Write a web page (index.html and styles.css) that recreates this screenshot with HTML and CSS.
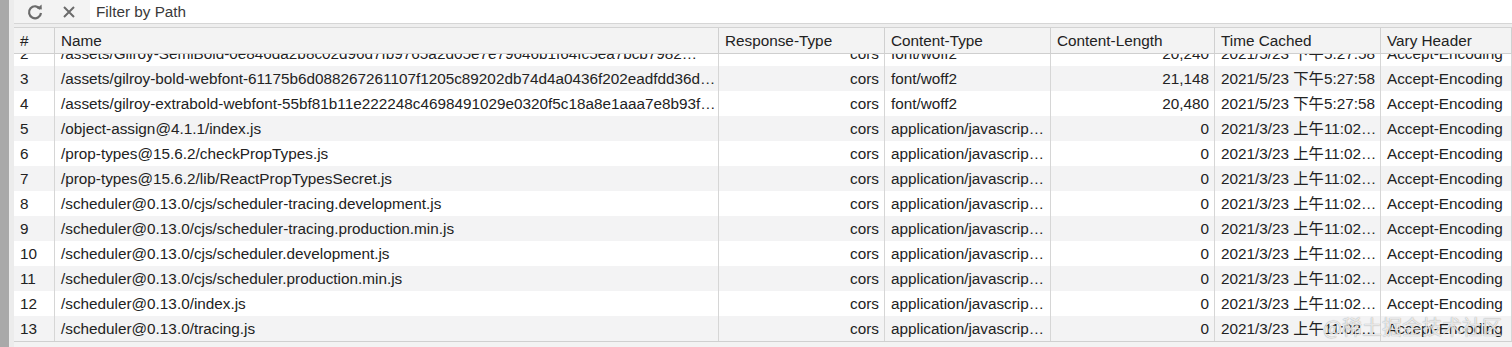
FILE: index.html
```html
<!DOCTYPE html>
<html>
<head>
	<meta charset="utf-8">
	<title>Cache Storage</title>
	<link rel="stylesheet" href="styles.css">
</head>
<body>

<div class="sideStrip"></div>

<div class="panel">

	<!-- TOOLBAR -->
	<div class="toolbar">
		<button class="toolBtn" title="Refresh">
			<svg width="18" height="18" viewBox="0 0 18 18">
				<path d="M14.2 6.2A6 6 0 1 0 15 10" fill="none" stroke="#6b6b6b" stroke-width="2.2"/>
				<path d="M10.8 5.6L15.8 6.6L15.6 1.6Z" fill="#6b6b6b"/>
			</svg>
		</button>
		<button class="toolBtn" title="Clear">
			<svg width="14" height="14" viewBox="0 0 14 14">
				<path d="M2 2L12 12M12 2L2 12" stroke="#6b6b6b" stroke-width="2"/>
			</svg>
		</button>
		<div class="filter">Filter by Path</div>
	</div>
	<div class="spacer"></div>

	<!-- TABLE -->
	<div class="table">
		<div class="row head">
			<div class="cell">#</div>
			<div class="cell">Name</div>
			<div class="cell">Response-Type</div>
			<div class="cell">Content-Type</div>
			<div class="cell">Content-Length</div>
			<div class="cell">Time Cached</div>
			<div class="cell">Vary Header</div>
		</div>

		<div class="scroller">
			<div class="rows">
				<div class="row">
					<div class="cell">1</div>
					<div class="cell">/assets/Gilroy-Medium-3f9a61c2b8d0e4c7a1e2f5b6d9c8a7e4f0b1c2d3e4f5a6b7c8d9e0f1a2b3c4d5…</div>
					<div class="cell num">cors</div>
					<div class="cell">font/woff2</div>
					<div class="cell num">20,912</div>
					<div class="cell">2021/5/23 下午5:27:58</div>
					<div class="cell">Accept-Encoding</div>
				</div>
				<div class="row">
					<div class="cell">2</div>
					<div class="cell">/assets/Gilroy-SemiBold-0e846da2b8c02d96d7fb9765a2d05e7e79646b1f64fc5ea7bcb7982…</div>
					<div class="cell num">cors</div>
					<div class="cell">font/woff2</div>
					<div class="cell num">20,240</div>
					<div class="cell">2021/5/23 下午5:27:58</div>
					<div class="cell">Accept-Encoding</div>
				</div>
				<div class="row">
					<div class="cell">3</div>
					<div class="cell">/assets/gilroy-bold-webfont-61175b6d088267261107f1205c89202db74d4a0436f202eadfdd36d…</div>
					<div class="cell num">cors</div>
					<div class="cell">font/woff2</div>
					<div class="cell num">21,148</div>
					<div class="cell">2021/5/23 下午5:27:58</div>
					<div class="cell">Accept-Encoding</div>
				</div>
				<div class="row">
					<div class="cell">4</div>
					<div class="cell">/assets/gilroy-extrabold-webfont-55bf81b11e222248c4698491029e0320f5c18a8e1aaa7e8b93f…</div>
					<div class="cell num">cors</div>
					<div class="cell">font/woff2</div>
					<div class="cell num">20,480</div>
					<div class="cell">2021/5/23 下午5:27:58</div>
					<div class="cell">Accept-Encoding</div>
				</div>
				<div class="row">
					<div class="cell">5</div>
					<div class="cell">/object-assign@4.1.1/index.js</div>
					<div class="cell num">cors</div>
					<div class="cell">application/javascrip…</div>
					<div class="cell num">0</div>
					<div class="cell">2021/3/23 上午11:02…</div>
					<div class="cell">Accept-Encoding</div>
				</div>
				<div class="row">
					<div class="cell">6</div>
					<div class="cell">/prop-types@15.6.2/checkPropTypes.js</div>
					<div class="cell num">cors</div>
					<div class="cell">application/javascrip…</div>
					<div class="cell num">0</div>
					<div class="cell">2021/3/23 上午11:02…</div>
					<div class="cell">Accept-Encoding</div>
				</div>
				<div class="row">
					<div class="cell">7</div>
					<div class="cell">/prop-types@15.6.2/lib/ReactPropTypesSecret.js</div>
					<div class="cell num">cors</div>
					<div class="cell">application/javascrip…</div>
					<div class="cell num">0</div>
					<div class="cell">2021/3/23 上午11:02…</div>
					<div class="cell">Accept-Encoding</div>
				</div>
				<div class="row">
					<div class="cell">8</div>
					<div class="cell">/scheduler@0.13.0/cjs/scheduler-tracing.development.js</div>
					<div class="cell num">cors</div>
					<div class="cell">application/javascrip…</div>
					<div class="cell num">0</div>
					<div class="cell">2021/3/23 上午11:02…</div>
					<div class="cell">Accept-Encoding</div>
				</div>
				<div class="row">
					<div class="cell">9</div>
					<div class="cell">/scheduler@0.13.0/cjs/scheduler-tracing.production.min.js</div>
					<div class="cell num">cors</div>
					<div class="cell">application/javascrip…</div>
					<div class="cell num">0</div>
					<div class="cell">2021/3/23 上午11:02…</div>
					<div class="cell">Accept-Encoding</div>
				</div>
				<div class="row">
					<div class="cell">10</div>
					<div class="cell">/scheduler@0.13.0/cjs/scheduler.development.js</div>
					<div class="cell num">cors</div>
					<div class="cell">application/javascrip…</div>
					<div class="cell num">0</div>
					<div class="cell">2021/3/23 上午11:02…</div>
					<div class="cell">Accept-Encoding</div>
				</div>
				<div class="row">
					<div class="cell">11</div>
					<div class="cell">/scheduler@0.13.0/cjs/scheduler.production.min.js</div>
					<div class="cell num">cors</div>
					<div class="cell">application/javascrip…</div>
					<div class="cell num">0</div>
					<div class="cell">2021/3/23 上午11:02…</div>
					<div class="cell">Accept-Encoding</div>
				</div>
				<div class="row">
					<div class="cell">12</div>
					<div class="cell">/scheduler@0.13.0/index.js</div>
					<div class="cell num">cors</div>
					<div class="cell">application/javascrip…</div>
					<div class="cell num">0</div>
					<div class="cell">2021/3/23 上午11:02…</div>
					<div class="cell">Accept-Encoding</div>
				</div>
				<div class="row">
					<div class="cell">13</div>
					<div class="cell">/scheduler@0.13.0/tracing.js</div>
					<div class="cell num">cors</div>
					<div class="cell">application/javascrip…</div>
					<div class="cell num">0</div>
					<div class="cell">2021/3/23 上午11:02…</div>
					<div class="cell">Accept-Encoding</div>
				</div>
			</div>
		</div>
		<div class="footer"></div>
	</div>

	<div class="watermark">@稀土掘金技术社区</div>
</div>

</body>
</html>
```

FILE: styles.css
```css
html, body {
	margin: 0;
	height: 100%;
}
body {
	display: flex;
	background: #fff;
	font-family: "Liberation Sans", Arial, "Noto Sans CJK SC", sans-serif;
	font-size: 15.3px;
	color: #222;
	overflow: hidden;
}

.sideStrip {
	width: 9px;
	flex: none;
	background: #a9a9a9;
}

.panel {
	flex: 1;
	position: relative;
	display: flex;
	flex-direction: column;
	border-left: 5px solid #ececec;
	min-width: 0;
}

/* toolbar */
.toolbar {
	height: 23px;
	display: flex;
	align-items: center;
	background: #f3f3f3;
	border-bottom: 1px solid #d6d6d6;
	padding-left: 4px;
}
.toolBtn {
	border: none;
	background: none;
	padding: 0;
	width: 34px;
	height: 23px;
	display: flex;
	align-items: center;
	justify-content: center;
}
.filter {
	flex: 1;
	align-self: stretch;
	margin-left: 4px;
	background: #fff;
	padding-left: 6px;
	line-height: 24px;
	color: #3a3a3a;
}
.spacer {
	height: 3px;
	background: #eeeeee;
	border-bottom: 1px solid #d3d3d3;
}

/* table */
.table {
	flex: 1;
	display: flex;
	flex-direction: column;
	min-height: 0;
}
.row {
	display: grid;
	grid-template-columns: 41px 664px 166px 166px 164px 166px 1fr;
	height: 25px;
	line-height: 25px;
	background: #fff;
}
.rows .row:nth-child(odd) {
	background: #f3f3f4;
}
.cell {
	padding: 0 1px 0 6px;
	border-right: 1px solid #d6d6d6;
	white-space: nowrap;
	overflow: hidden;
	text-overflow: ellipsis;
}
.cell.num {
	text-align: right;
	padding-right: 5px;
}
.row.head {
	height: 25px;
	background: #f3f3f3;
	border-bottom: 1px solid #cfcfcf;
	line-height: 26px;
	position: relative;
	z-index: 1;
}
.row.head .cell {
	border-right-color: #d0d0d0;
}

.scroller {
	height: 287px;
	overflow: hidden;
}
.rows {
	margin-top: -38px;
}
.footer {
	flex: 1;
	background: #f3f3f3;
	border-top: 1px solid #d0d0d0;
}

.watermark {
	position: absolute;
	right: 10px;
	bottom: 9px;
	font-family: "Noto Sans CJK SC", sans-serif;
	font-size: 20px;
	line-height: 22px;
	color: rgba(255,255,255,0.8);
	text-shadow: 0 0 1px rgba(0,0,0,0.45);
	pointer-events: none;
}
```
